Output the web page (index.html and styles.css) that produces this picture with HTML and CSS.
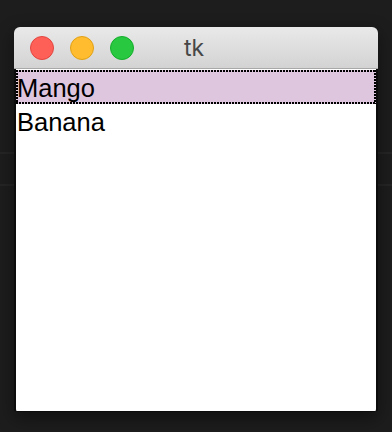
FILE: index.html
```html
<!DOCTYPE html>
<html>
<head>
<meta charset="utf-8">
<link rel="stylesheet" href="styles.css">
</head>
<body>
<div class="window">
  <div class="titlebar">
    <div class="lights">
      <span class="light red"></span>
      <span class="light yellow"></span>
      <span class="light green"></span>
    </div>
    <div class="title">tk</div>
    <div class="spacer"></div>
  </div>
  <div class="content">
    <ul class="listbox">
      <li class="item selected">Mango</li>
      <li class="item">Banana</li>
    </ul>
  </div>
</div>
</body>
</html>
```
FILE: styles.css
```css
html, body {
  margin: 0;
  padding: 0;
  height: 100%;
}
body {
  background: linear-gradient(to bottom,
    #1d1d1d 0, #1d1d1d 152px,
    #252525 152px, #252525 154px,
    #1d1d1d 154px, #1d1d1d 184px,
    #252525 184px, #252525 186px,
    #1d1d1d 186px);
  overflow: hidden;
  padding-top: 27px;
  padding-left: 14px;
  box-sizing: border-box;
}
.window {
  width: 364px;
  display: flex;
  flex-direction: column;
  border-radius: 6px 6px 3px 3px;
  box-shadow: 0 6px 18px rgba(0,0,0,0.45);
}
.titlebar {
  height: 41px;
  border-bottom: 1px solid #a8a8a8;
  background: linear-gradient(to bottom, #e9e9e9, #d3d3d3);
  border-radius: 6px 6px 0 0;
  display: grid;
  grid-template-columns: 1fr auto 1fr;
  align-items: center;
}
.lights {
  display: flex;
  gap: 16px;
  padding-left: 16px;
}
.light {
  width: 24px;
  height: 24px;
  border-radius: 50%;
  box-sizing: border-box;
}
.red { background: #fe5f57; border: 1px solid #e2463f; }
.yellow { background: #febc2e; border: 1px solid #e1a116; }
.green { background: #28c840; border: 1px solid #14ae2b; }
.title {
  font-family: Inter, "Liberation Sans", sans-serif;
  font-size: 23px;
  color: #474747;
  padding-top: 1px;
  margin-right: 4px;
}
.content {
  height: 343px;
  background: #ffffff;
  border-left: 2px solid #0c0c0c;
  border-right: 2px solid #0c0c0c;
  border-bottom: 1px solid #0c0c0c;
  border-radius: 0 0 3px 3px;
  box-sizing: border-box;
  padding-top: 1px;
}
.listbox {
  list-style: none;
  margin: 0;
  padding: 0;
}
.item {
  height: 34px;
  box-sizing: border-box;
  padding: 3px 1px 0;
  line-height: 30px;
  font-family: "Liberation Sans", Arial, sans-serif;
  font-size: 25.5px;
  color: #000;
}
.selected {
  background:
    linear-gradient(to right, #000 2px, transparent 2px) top left / 3px 2px repeat-x,
    linear-gradient(to right, #000 2px, transparent 2px) bottom left / 3px 2px repeat-x,
    linear-gradient(to bottom, #000 2px, transparent 2px) top left / 2px 3px repeat-y,
    linear-gradient(to bottom, #000 2px, transparent 2px) top right / 2px 3px repeat-y,
    #dec6df;
}
```
